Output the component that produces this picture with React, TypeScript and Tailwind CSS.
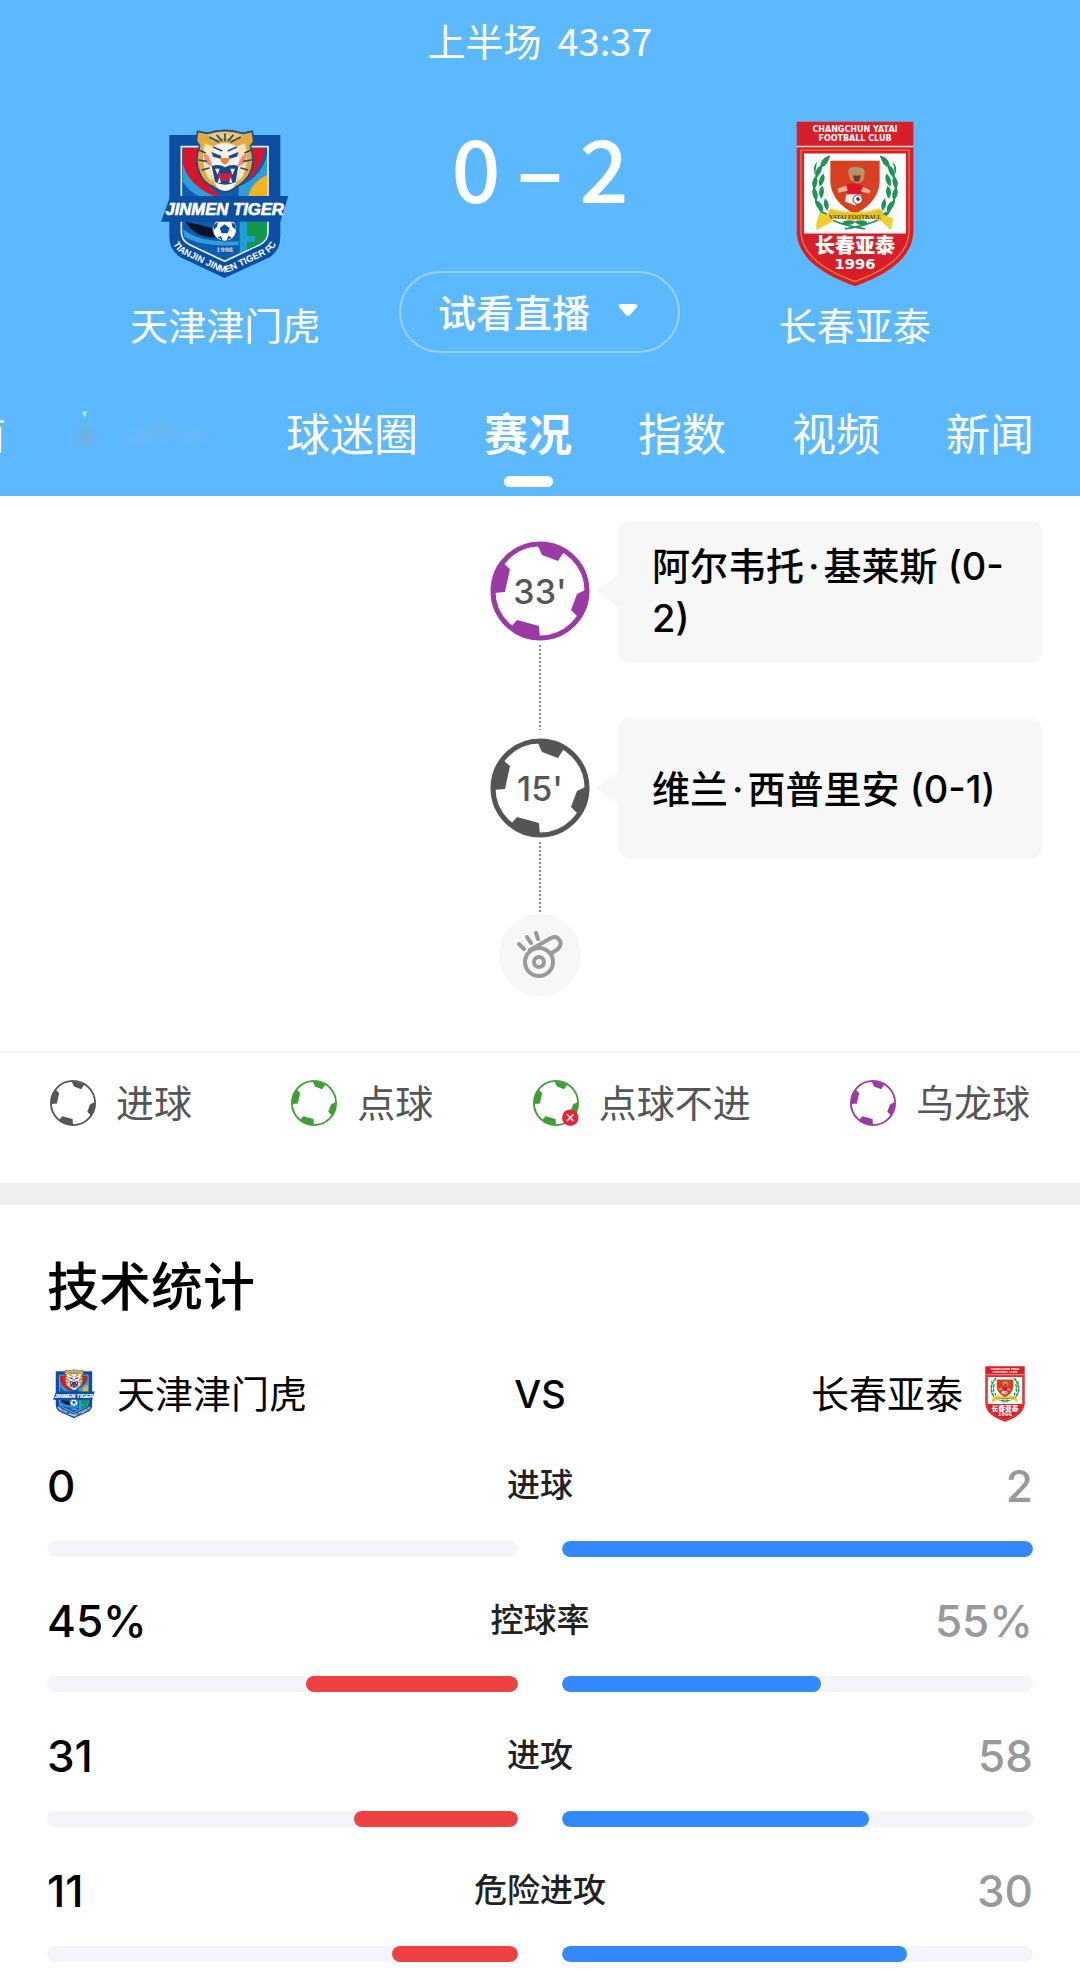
import { useState } from "react";

type BallKind = "goal" | "penalty" | "missed" | "own";

const ballColors: Record<BallKind, string> = {
  goal: "#555555",
  penalty: "#3f9e37",
  missed: "#3f9e37",
  own: "#9c3aa5",
};

const tabs = ["球迷圈", "赛况", "指数", "视频", "新闻"];

const events: { minute: string; kind: BallKind; first: string; last: string; score: string }[] = [
  { minute: "33'", kind: "own", first: "阿尔韦托", last: "基莱斯", score: "(0-2)" },
  { minute: "15'", kind: "goal", first: "维兰", last: "西普里安", score: "(0-1)" },
];

const legend: { kind: BallKind; label: string }[] = [
  { kind: "goal", label: "进球" },
  { kind: "penalty", label: "点球" },
  { kind: "missed", label: "点球不进" },
  { kind: "own", label: "乌龙球" },
];

const stats = [
  { label: "进球", home: 0, away: 2, unit: "" },
  { label: "控球率", home: 45, away: 55, unit: "%" },
  { label: "进攻", home: 31, away: 58, unit: "" },
  { label: "危险进攻", home: 11, away: 30, unit: "" },
];

function TigerLogo({ id, className }: { id: string; className: string }) {
  return (
    <svg viewBox="122 88 384 448" className={className} role="img" aria-label="天津津门虎">
      <path d="M147 105H480V410Q480 450 448 472L313 534L180 472Q147 450 147 410Z" fill="#0b4ea2" />
      <path d="M183 140H443V396Q443 422 418 434L313 484L208 434Q183 422 183 396Z" fill="#0e5bb0" stroke="#e8f2fb" strokeWidth="5" />
      <path d="M187 144H240V230L300 290H270Q200 270 187 220Z" fill="#d9152c" />
      <path d="M187 190Q205 260 290 292H187Z" fill="#2f9fdc" />
      <path d="M187 245Q210 280 245 292H187Z" fill="#0e5bb0" />
      <path d="M380 144H435Q425 205 385 240Z" fill="#d9152c" />
      <path d="M440 165V225Q400 250 380 292H355V260Q425 230 440 165Z" fill="#2f9fdc" />
      <path d="M440 225V292H382Q395 245 440 225Z" fill="#f4b41c" />
      <path d="M358 360H440V396Q440 420 416 432L358 460Z" fill="#1f9fd8" />
      <path d="M380 365H440V396Q440 420 416 432L380 449V425H404V408H380Z" fill="#12984a" />
      <path d="M195 365Q235 372 275 385L290 412Q225 415 195 365Z" fill="#0a1420" />
      <path d="M188 388Q240 430 355 424V436Q240 440 192 410Z" fill="#2f9fdc" />
      {/* tiger head */}
      <path d="M232 94L262 100Q314 82 366 100L396 94L400 126L390 138Q408 190 384 228Q366 252 346 262Q314 288 282 262Q250 250 240 224Q220 184 238 138L228 122Z" fill="#e3aa3f" stroke="#1b4c86" strokeWidth="5" />
      <path d="M254 130Q238 180 262 232L276 244Q262 180 280 140ZM374 130Q390 180 366 232L352 244Q366 180 348 140Z" fill="#f8e6bd" />
      <path d="M280 138Q314 120 348 138L358 180Q362 226 340 262Q314 284 290 262Q266 226 270 180Z" fill="#f6f3ee" />
      <path d="M262 106Q314 88 366 106L350 122Q314 106 278 122Z" fill="#f0c977" />
      <path d="M250 160Q268 164 276 200Q252 196 250 160ZM380 160Q360 164 352 200Q378 196 380 160Z" fill="#f08b7c" />
      <path d="M268 112L296 126M360 112L332 126M314 102V122M290 106L304 122M338 106L324 122M236 150L254 158M392 150L374 158M236 180L258 184M392 180L370 184M246 210L266 204M382 210L362 204M280 142L304 152M348 142L324 152" stroke="#1b4c86" strokeWidth="5" fill="none" strokeLinecap="round" />
      <path d="M274 156L304 168L300 176L278 170ZM354 156L324 168L328 176L350 170Z" fill="#1b4c86" />
      <path d="M298 174H330L322 188L314 194L304 188Z" fill="#ee8432" />
      <path d="M274 198Q296 190 314 202Q334 190 354 198L346 246Q314 262 284 246Z" fill="#164788" />
      <path d="M294 220H334V240Q314 248 296 240Z" fill="#c62040" />
      <path d="M284 206L292 224L298 206ZM344 206L336 224L330 206ZM292 248L297 232L302 248ZM336 248L331 232L326 248Z" fill="#ffffff" />
      {/* ball */}
      <circle cx="313" cy="388" r="36" fill="#ffffff" stroke="#1b4c86" strokeWidth="3" />
      <path d="M313 373L328 384L322 400H304L298 384ZM281 374L293 366L290 380L280 390ZM345 374L333 366L336 380L346 390ZM292 412L302 408L308 423ZM334 412L324 408L318 423Z" fill="#0b4ea2" />
      <path d="M150 288H504L480 365H122Z" fill="#0b4ea2" />
      <text x="313" y="345" textAnchor="middle" fontSize="50" fontWeight="700" fontStyle="italic" fill="#ffffff" stroke="#ffffff" strokeWidth="2" className="font-['Liberation_Sans',sans-serif]">
        JINMEN TIGER
      </text>
      <text x="313" y="457" textAnchor="middle" fontSize="18" fontWeight="700" fill="#d8e8f8" className="font-['DejaVu_Serif',serif]">
        1998
      </text>
      <path id={id} d="M154 372V404Q154 446 190 464L292 512Q313 521 334 512L436 464Q472 446 472 404V372" fill="none" />
      <text fontSize="28" fontWeight="700" fill="#ffffff" className="font-['Liberation_Sans',sans-serif]">
        <textPath href={`#${id}`} startOffset="50%" textAnchor="middle">
          TIANJIN JINMEN TIGER FC
        </textPath>
      </text>
    </svg>
  );
}

function YataiLogo({ className }: { className: string }) {
  return (
    <svg viewBox="113 65 354 497" className={className} role="img" aria-label="长春亚泰">
      <path d="M115 67H465V400Q460 500 290 560Q120 500 115 400Z" fill="#d71f2b" />
      <path d="M115 141H465" stroke="#f7d9dc" strokeWidth="5" />
      <path d="M128 152H452V400Q446 490 290 546Q134 490 128 400Z" fill="none" stroke="#f07a35" strokeWidth="4" />
      <path d="M137 162H443V402H137Z" fill="#ffffff" />
      <g fill="#ffffff" fontWeight="700" textAnchor="middle" className="font-['DejaVu_Sans',sans-serif]">
        <text x="290" y="98" fontSize="24">CHANGCHUN YATAI</text>
        <text x="290" y="125" fontSize="24">FOOTBALL CLUB</text>
        <text x="290" y="508" fontSize="44">1996</text>
      </g>
      <text x="290" y="461" fontSize="60" fontWeight="900" textAnchor="middle" fill="#ffffff" className="font-['Noto_Sans_CJK_SC',sans-serif]">
        长春亚泰
      </text>
      {/* laurel */}
      {[false, true].map((flip) => (
        <g key={String(flip)} transform={flip ? "matrix(-1 0 0 1 580 0)" : undefined} fill="#1f9458">
          <path d="M214 170Q140 250 184 330Q210 372 320 388" fill="none" stroke="#1f9458" strokeWidth="5" />
          <path d="M214 168Q184 176 186 206Q210 198 214 168ZM190 196Q166 208 172 236Q194 222 190 196ZM176 186Q160 206 170 226ZM174 228Q154 244 166 270Q184 254 174 228ZM196 222Q206 244 184 262Q176 236 196 222ZM166 262Q154 284 174 304Q186 282 166 262ZM192 258Q204 280 188 298Q174 276 192 258ZM170 300Q168 324 194 336Q198 312 170 300ZM200 296Q218 312 208 334Q190 320 200 296ZM184 334Q192 356 218 358Q212 338 184 334ZM250 372Q262 356 292 366Q276 384 250 372Z" />
        </g>
      ))}
      <path d="M216 184H364V250Q358 310 290 344Q222 310 216 250Z" fill="#d8401f" />
      {/* mascot */}
      <path d="M270 222Q266 200 296 204Q324 204 318 228Q320 248 296 252Q274 250 270 222Z" fill="#c78a63" />
      <path d="M270 216Q272 198 300 204Q322 204 318 220Q296 210 270 216Z" fill="#9aa27c" />
      <path d="M284 228H308L302 246H288Z" fill="#6d3b28" />
      <path d="M262 256Q296 246 316 262L308 288H268Z" fill="#d9152c" />
      <path d="M264 258L238 268L240 280L268 274ZM314 262L338 274L332 282L308 276Z" fill="#edb48e" />
      <path d="M264 284H308L312 306L290 318L260 306Z" fill="#f6eee8" />
      <circle cx="298" cy="300" r="14" fill="#ffffff" stroke="#7a3030" strokeWidth="3" />
      <path d="M292 296L300 292L306 300L298 306Z" fill="#7a3030" />
      <path d="M174 372L184 338L206 346L216 326Q290 350 364 326L376 346L404 356L398 392L370 366Q350 362 352 350Q290 372 228 350L226 364L174 392Z" fill="#efcf2e" />
      <path d="M212 332Q290 354 370 332L372 352Q290 372 210 352Z" fill="#e4c02c" />
      <text x="290" y="357" fontSize="18" fontWeight="700" textAnchor="middle" fill="#5a4a12" className="font-['Liberation_Serif',serif]">
        YATAI FOOTBALL
      </text>
    </svg>
  );
}

function BallIcon({ kind, thin, className }: { kind: BallKind; thin?: boolean; className: string }) {
  const color = ballColors[kind];

  return (
    <svg viewBox="0 0 100 100" className={className} aria-hidden="true">
      <circle cx="50" cy="50" r={thin ? 48 : 47} fill="#ffffff" stroke={color} strokeWidth={thin ? 4 : 5} />
      <path
        fill={color}
        d="M47 3L52 14L68 20L75 9Q62 3 47 3ZM13 22L20 28L15 51L3 52Q2 34 13 22ZM97 48L87 53L81 69L89 77Q98 62 97 48ZM50 98L49 85L27 79L20 87Q34 98 50 98Z"
      />
      {kind === "missed" && (
        <g>
          <circle cx="81" cy="82" r="18" fill="#e0263a" />
          <path d="M74 75L88 89M88 75L74 89" stroke="#ffffff" strokeWidth="3" />
        </g>
      )}
    </svg>
  );
}

function WhistleIcon() {
  return (
    <svg viewBox="0 0 46 48" className="h-12 w-[46px]" fill="none" stroke="#9a9a9a" strokeWidth="4" strokeLinecap="round" aria-hidden="true">
      <circle cx="22" cy="31" r="14" />
      <circle cx="22" cy="31" r="5" />
      <path d="M13 19L34 7Q40 4 43 10Q45 14 41 18L35 22" />
      <path d="M2 13L7 18M10 6L14 12M19 2L21 8" />
    </svg>
  );
}

/* Faded-out tab at the scroll edge */
function FadedTab() {
  return (
    <svg viewBox="0 0 148 72" className="h-[72px] w-[148px] shrink-0" aria-hidden="true">
      <g className="blur-xs">
        <ellipse cx="14" cy="40" rx="9" ry="12" fill="#6eb0e2" />
        <ellipse cx="66" cy="42" rx="14" ry="6" fill="#6cb7f8" />
        <ellipse cx="88" cy="34" rx="16" ry="10" fill="#67b7f2" />
        <ellipse cx="122" cy="38" rx="16" ry="8" fill="#64b8f8" />
      </g>
      <path d="M10 16L15 15L13 22Z" fill="#b4e6ff" />
    </svg>
  );
}

function StatRow({ label, home, away, unit }: (typeof stats)[number]) {
  const total = home + away;

  return (
    <div className="mb-[31px] last:mb-0">
      <div className="grid h-16 grid-cols-3 items-center">
        <span className="text-[44px] font-medium text-black">
          {home}
          {unit}
        </span>
        <span className="text-center text-[33px] font-medium text-[#222222]">{label}</span>
        <span className="text-right text-[44px] font-medium text-[#999999]">
          {away}
          {unit}
        </span>
      </div>
      <div className="mt-6 grid grid-cols-2 gap-11">
        <div className="flex h-4 justify-end overflow-hidden rounded-full bg-[#f4f5fa]">
          <div className="rounded-full bg-[#ef4141]" style={{ width: `${(home / total) * 100}%` }} />
        </div>
        <div className="flex h-4 overflow-hidden rounded-full bg-[#f4f5fa]">
          <div className="rounded-full bg-[#3388fc]" style={{ width: `${(away / total) * 100}%` }} />
        </div>
      </div>
    </div>
  );
}

export default function App() {
  const [active, setActive] = useState("赛况");

  return (
    <div className="min-h-screen bg-white font-['Inter','Noto_Sans_CJK_SC',sans-serif]">
      <header className="bg-[#5cb9ff] font-['Noto_Sans_CJK_SC',sans-serif] text-white">
        <p className="flex justify-center gap-4 pt-2.5 text-[38px] leading-[60px]">
          <span>上半场</span>
          <span>43:37</span>
        </p>

        <div className="grid grid-cols-3 px-[68px]">
          <div className="flex flex-col items-center">
            <div className="flex h-[228px] items-center pt-10">
              <TigerLogo id="tiger-large" className="h-[150px] w-32" />
            </div>
            <span className="text-[38px] leading-[52px]">天津津门虎</span>
          </div>

          <div className="flex flex-col items-center">
            <div className="mt-9 flex h-[120px] items-center gap-4 text-[86px] leading-none font-medium">
              <span>0</span>
              <span className="font-bold">–</span>
              <span>2</span>
            </div>
            <button className="mt-[45px] flex h-[82px] w-[281px] items-center justify-center gap-7 rounded-full border-2 border-[#96d4ff] pr-1 pb-1 text-[38px] font-medium">
              试看直播
              <svg viewBox="0 0 20 12" className="h-3 w-5 fill-white" aria-hidden="true">
                <path d="M2 0H18Q20 1 19 3L12 11Q10 13 8 11L1 3Q0 1 2 0Z" />
              </svg>
            </button>
          </div>

          <div className="flex flex-col items-center">
            <div className="flex h-[228px] items-center pt-10">
              <YataiLogo className="h-[166px] w-[118px]" />
            </div>
            <span className="text-[38px] leading-[52px]">长春亚泰</span>
          </div>
        </div>

        <nav className="mt-[43px] flex h-[100px] justify-end gap-[66px] overflow-hidden pr-[46px] text-[44px] leading-[72px]">
          <button className="flex shrink-0 flex-col items-center">前</button>
          <FadedTab />
          {tabs.map((tab) => (
            <button
              key={tab}
              onClick={() => setActive(tab)}
              className={`flex shrink-0 flex-col items-center ${tab === active ? "font-bold" : ""}`}
            >
              {tab}
              {tab === active && <span className="mt-2 h-[11px] w-[49px] rounded-full bg-white" />}
            </button>
          ))}
        </nav>
      </header>

      <section className="pt-[25px] pb-[55px]">
        {events.map((event) => (
          <div key={event.minute} className="grid grid-cols-[1fr_100px_1fr]">
            <div />
            <div className="flex flex-col items-center">
              <div className="relative mt-5 h-[100px] w-[100px] shrink-0">
                <BallIcon kind={event.kind} className="h-full w-full" />
                <span className="absolute inset-0 flex items-center justify-center text-[34px] font-medium text-[#555555]">
                  {event.minute}
                </span>
              </div>
              <div className="mt-1 -mb-3 w-0.5 flex-1 bg-[repeating-linear-gradient(#888_0_2px,transparent_2px_4px)]" />
            </div>
            <div className="flex pr-[38px] pb-[55px] pl-1.5">
              <svg viewBox="0 0 22 32" className="mt-[54px] h-8 w-[22px] shrink-0 fill-[#f7f7f7]" aria-hidden="true">
                <path d="M0 16L22 0V32Z" />
              </svg>
              <div className="flex min-h-[141px] flex-1 items-center rounded-xl bg-[#f7f7f7] px-[34px] py-[19px] text-[38px] leading-[52px] font-medium text-black">
                <p>
                  {event.first}
                  <span className="mx-1">·</span>
                  {event.last} {event.score}
                </p>
              </div>
            </div>
          </div>
        ))}
        <div className="relative mx-auto flex h-[82px] w-[82px] items-center justify-center rounded-full bg-[#f7f7f7]">
          <WhistleIcon />
        </div>
      </section>

      <ul className="flex h-[132px] justify-between border-t-2 border-[#f3f3f3] px-[50px] pt-6 text-[38px] leading-[52px] text-[#555555]">
        {legend.map((item) => (
          <li key={item.label} className="flex h-[52px] items-center gap-5">
            <BallIcon kind={item.kind} thin className="h-[46px] w-[46px]" />
            {item.label}
          </li>
        ))}
      </ul>

      <div className="h-[22px] bg-[#f0f0f0]" />

      <section className="px-[47px] pt-[47px]">
        <h2 className="text-[52px] leading-[72px] font-medium text-black">技术统计</h2>
        <div className="mt-[37px] grid h-[66px] grid-cols-[1fr_auto_1fr] items-center text-[38px] text-black">
          <div className="flex items-center gap-[22px] pl-1.5">
            <TigerLogo id="tiger-small" className="h-[50px] w-[42px]" />
            <span>天津津门虎</span>
          </div>
          <span className="font-medium">VS</span>
          <div className="flex items-center justify-end gap-[22px] pr-2">
            <span>长春亚泰</span>
            <YataiLogo className="h-14 w-10" />
          </div>
        </div>
        <div className="mt-[26px]">
          {stats.map((stat) => (
            <StatRow key={stat.label} {...stat} />
          ))}
        </div>
      </section>
    </div>
  );
}
